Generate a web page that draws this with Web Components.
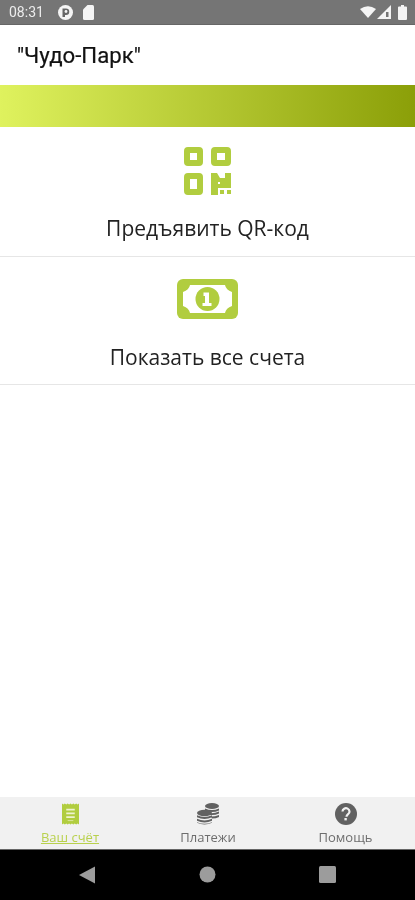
<!DOCTYPE html>
<html lang="ru">
<head>
<meta charset="utf-8">
<title>Чудо-Парк</title>
<style>
html, body { margin: 0; padding: 0; background: #fff; }
body { width: 415px; height: 900px; overflow: hidden; font-family: "Open Sans", "Noto Sans", sans-serif; }
</style>
</head>
<body>
<app-screen>
  <status-bar></status-bar>
  <title-bar>"Чудо-Парк"</title-bar>
  <gradient-strip></gradient-strip>
  <action-row label="Предъявить QR-код" icon="qr"></action-row>
  <action-row label="Показать все счета" icon="money"></action-row>
  <bottom-nav></bottom-nav>
  <system-nav></system-nav>
</app-screen>
<script>
const ICONS = {
  qr: `<svg width="47" height="48" viewBox="0 0 47 48" fill="#b1cd3f" fill-rule="evenodd">
    <path d="M4 0h11a4 4 0 0 1 4 4v11a4 4 0 0 1-4 4H4a4 4 0 0 1-4-4V4a4 4 0 0 1 4-4zM6 6v7h7V6z"/>
    <path d="M31 0h12a4 4 0 0 1 4 4v11a4 4 0 0 1-4 4H31a4 4 0 0 1-4-4V4a4 4 0 0 1 4-4zM33 6v7h8V6z"/>
    <path d="M4 26h11a4 4 0 0 1 4 4v14a4 4 0 0 1-4 4H4a4 4 0 0 1-4-4V30a4 4 0 0 1 4-4zM6 32v10h7V32z"/>
    <path d="M27 26h6l3 5h5v-5h6v15H34v7h-7zM34 35v2h2v-2z"/>
    <rect x="36" y="43" width="4" height="4"/><rect x="43" y="43" width="4" height="4"/>
  </svg>`,
  money: `<svg width="61" height="40" viewBox="0 0 61 40">
    <rect width="61" height="40" rx="6" fill="#b1cd3f"/>
    <path d="M13 6h35q1 5 7 7v14q-6 2-7 7H13q-1-5-7-7V13q6-2 7-7z" fill="#fff"/>
    <circle cx="30.500" cy="20" r="12" fill="#b1cd3f"/>
    <path d="M26.500 13.500h5.500v10.500h2.500v3h-9v-3h2.500v-7h-1.500z" fill="#fff"/>
  </svg>`,
  receipt: `<svg width="17" height="22" viewBox="0 0 18 22">
    <path d="M0 0l1.500 1L3 0l1.500 1L6 0l1.500 1L9 0l1.500 1L12 0l1.500 1L15 0l1.500 1L18 0v22l-1.500-1-1.500 1-1.500-1-1.500 1-1.500-1L9 22l-1.500-1L6 22l-1.500-1L3 22l-1.500-1L0 22z" fill="#b1cd3f"/>
    <path d="M4.500 5.500h9v1.800h-9zM4.500 9.500h9v1.800h-9zM4.500 13.500h9v1.800h-9z" fill="#eef3cf"/>
    <path d="M6 17.500h6v1H6z" fill="#dbe79f"/>
  </svg>`,
  coins: `<svg width="23" height="22" viewBox="0 0 23 22" fill="#616161">
    <ellipse cx="15" cy="3" rx="7" ry="3"/>
    <path d="M8 5.500q7 3 14 0v2q-7 3-14 0zM12 10q5 .8 10-1.500v2q-4 2-9 1.500zM14 13.500q4 0 8-1.500v2q-3 1.500-7 1.500z"/>
    <ellipse cx="7.500" cy="10" rx="7.500" ry="3.200"/>
    <path d="M0 12.300q7.500 3.500 15 0v2q-7.500 3.500-15 0zM0 15.800q7.500 3.500 15 0v2q-7.500 3.500-15 0zM0 19.200q7.500 3.300 15 0v.5q-7.500 3.600-15 0z"/>
  </svg>`,
  help: `<svg width="22" height="22" viewBox="0 0 22 22">
    <circle cx="11" cy="11" r="11" fill="#616161"/>
    <path d="M7.500 8.500a3.500 3.300 0 1 1 5.600 2.700c-1.100.9-1.600 1.300-1.600 2.600" fill="none" stroke="#f1f1f1" stroke-width="2.200"/>
    <rect x="9.400" y="15" width="2.400" height="2.400" fill="#f1f1f1"/>
  </svg>`
};

class AppScreen extends HTMLElement {
  connectedCallback() {
    // the reference is a soft, upscaled capture
    this.attachShadow({ mode: 'open' }).innerHTML = `<style>
      :host { display: flex; flex-direction: column; width: 415px; height: 900px; background: #fff; filter: blur(0.45px); }
    </style><slot></slot>`;
  }
}

class StatusBar extends HTMLElement {
  connectedCallback() {
    this.attachShadow({ mode: 'open' }).innerHTML = `<style>
      :host { display: flex; align-items: center; flex: none; height: 25px; box-sizing: border-box; padding: 0 8px 0 9px;
        background: #757575; border-bottom: 1px solid #666; color: #ececec; font: 14px Roboto, sans-serif; }
      .time { width: 49px; }
      .left { display: flex; align-items: center; gap: 10px; }
      .right { display: flex; align-items: center; gap: 1px; margin-left: auto; }
      svg { display: block; }
    </style>
    <span class="time">08:31</span>
    <div class="left">
      <svg width="15" height="15" viewBox="0 0 15 15"><circle cx="7.500" cy="7.500" r="7.500" fill="#f4f4f4"/><path d="M4.500 12V3.500h3.500a3 3 0 0 1 0 6.500H7v2z" fill="#666"/><circle cx="8" cy="6.500" r="1.400" fill="#f4f4f4"/></svg>
      <svg width="11" height="15" viewBox="0 0 11 15"><path d="M4.500 0h5A1.500 1.500 0 0 1 11 1.500v12a1.500 1.500 0 0 1-1.500 1.500h-8A1.500 1.500 0 0 1 0 13.500V4.500z" fill="#f4f4f4"/></svg>
    </div>
    <div class="right">
      <svg width="16" height="12" viewBox="0 0 16 12"><path d="M0 3Q8-2.500 16 3L8 12z" fill="#f4f4f4"/></svg>
      <svg width="14" height="14" viewBox="0 0 14 14"><path d="M14 0v14H0z" fill="#f4f4f4"/><path d="M9 7h2.500v5H9z" fill="#757575"/></svg>
      <svg width="9" height="15" viewBox="0 0 9 15" style="margin-left:6px"><path d="M3 0h3v1.500h2a1 1 0 0 1 1 1V14a1 1 0 0 1-1 1H1a1 1 0 0 1-1-1V2.500a1 1 0 0 1 1-1h2z" fill="#f4f4f4"/></svg>
    </div>`;
  }
}

class TitleBar extends HTMLElement {
  connectedCallback() {
    this.attachShadow({ mode: 'open' }).innerHTML = `<style>
      :host { display: flex; align-items: center; flex: none; height: 60px; padding-left: 17px; box-sizing: border-box;
        background: #fff; color: #111; font: 400 22.200px Roboto, sans-serif; -webkit-text-stroke: 0.2px #111; }
    </style><slot></slot>`;
  }
}

class GradientStrip extends HTMLElement {
  connectedCallback() {
    this.attachShadow({ mode: 'open' }).innerHTML = `<style>
      :host { display: block; flex: none; height: 42px; background: linear-gradient(90deg, #dff25e, #8b9f08); }
    </style>`;
  }
}

class ActionRow extends HTMLElement {
  connectedCallback() {
    const icon = this.getAttribute('icon');
    this.attachShadow({ mode: 'open' }).innerHTML = `<style>
      :host { display: flex; flex-direction: column; align-items: center; flex: none; box-sizing: border-box; height: 130px;
        border-bottom: 1px solid #e6e6e6; color: #222; font: 21px "Open Sans", sans-serif; }
      .icon { display: flex; align-items: center; justify-content: center; height: 48px; margin-top: 20px; }
      :host([icon="money"]) .icon { margin-top: 19px; height: 46px; }
      :host([icon="money"]) { height: 128px; }
      .label { margin-top: 19px; line-height: 28px; white-space: nowrap; }
      :host([icon="money"]) .label { margin-top: 21px; }
      svg { display: block; }
    </style>
    <div class="icon">${ICONS[icon]}</div>
    <div class="label">${this.getAttribute('label')}</div>`;
  }
}

class NavItem extends HTMLElement {
  connectedCallback() {
    this.attachShadow({ mode: 'open' }).innerHTML = `<style>
      :host { display: flex; flex-direction: column; align-items: center; flex: 1; padding-top: 6px; color: #6e6e6e; font: 13px "Open Sans", sans-serif; }
      .icon { height: 22px; }
      .text { margin-top: 3px; line-height: 18px; white-space: nowrap; }
      :host([active]) { color: #b9d14d; }
      :host([active]) .text { text-decoration: underline; }
      svg { display: block; }
    </style>
    <div class="icon">${ICONS[this.getAttribute('icon')]}</div>
    <div class="text"><slot></slot></div>`;
  }
}

class BottomNav extends HTMLElement {
  connectedCallback() {
    this.attachShadow({ mode: 'open' }).innerHTML = `<style>
      :host { display: flex; flex: none; margin-top: auto; background: #f1f1f1; border-bottom: 1px solid #666; height: 52px; }
      nav-item:first-of-type { flex: 0 0 140px; }
      nav-item:nth-of-type(2) { flex: 0 0 136px; }
    </style>
    <nav-item icon="receipt" active>Ваш счёт</nav-item>
    <nav-item icon="coins">Платежи</nav-item>
    <nav-item icon="help">Помощь</nav-item>`;
  }
}

class SystemNav extends HTMLElement {
  connectedCallback() {
    this.attachShadow({ mode: 'open' }).innerHTML = `<style>
      :host { display: flex; align-items: center; justify-content: center; gap: 103px; flex: none; height: 50px; background: #000; padding-bottom: 1px; box-sizing: border-box; }
      svg { display: block; }
    </style>
    <svg width="17" height="18" viewBox="0 0 17 18"><path d="M16 0.500v17L0 9z" fill="#9c9c9c"/></svg>
    <svg width="17" height="17" viewBox="0 0 17 17"><circle cx="8.500" cy="8.500" r="8" fill="#9c9c9c"/></svg>
    <svg width="17" height="17" viewBox="0 0 17 17"><rect width="17" height="17" rx="1.500" fill="#9c9c9c"/></svg>`;
  }
}

customElements.define('app-screen', AppScreen);
customElements.define('status-bar', StatusBar);
customElements.define('title-bar', TitleBar);
customElements.define('gradient-strip', GradientStrip);
customElements.define('action-row', ActionRow);
customElements.define('nav-item', NavItem);
customElements.define('bottom-nav', BottomNav);
customElements.define('system-nav', SystemNav);
</script>
</body>
</html>
